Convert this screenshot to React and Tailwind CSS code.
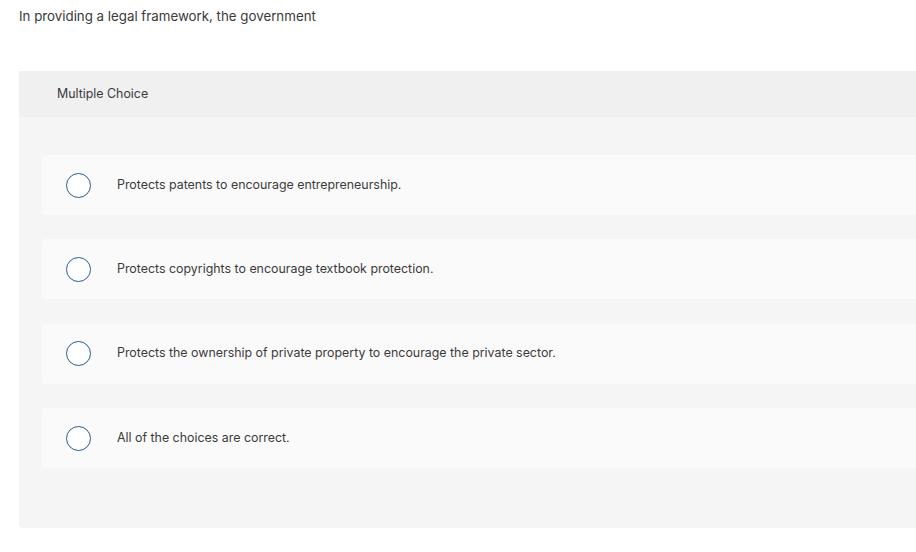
import React from 'react';

const choices = [
  'Protects patents to encourage entrepreneurship.',
  'Protects copyrights to encourage textbook protection.',
  'Protects the ownership of private property to encourage the private sector.',
  'All of the choices are correct.',
];

function App() {
  return (
    <div className="min-h-screen bg-white overflow-hidden text-[12.4px] text-[#3a3a3a]" style={{ fontFamily: 'Inter, "Open Sans", sans-serif' }}>
      <p className="pl-[19px] pt-[6px] leading-[20px] text-[13.3px]">In providing a legal framework, the government</p>

      <div className="ml-[19px] mt-[45px] w-[920px] rounded-b bg-[#f5f5f5]">
        <div className="h-[46px] flex items-center pl-[38px] bg-[#f0f0f0]">Multiple Choice</div>
        <div className="pl-[23px] pt-[38px] pb-[60px] flex flex-col gap-[24.4px]">
          {choices.map((c) => (
            <label key={c} className="h-[60px] flex items-center rounded bg-[#fafafa] cursor-pointer">
              <span className="ml-[24px] w-[25px] h-[25px] rounded-full border-[1.5px] border-[#2c5d93] bg-white shrink-0" />
              <span className="ml-[26px]">{c}</span>
            </label>
          ))}
        </div>
      </div>
    </div>
  );
}

export default App;
